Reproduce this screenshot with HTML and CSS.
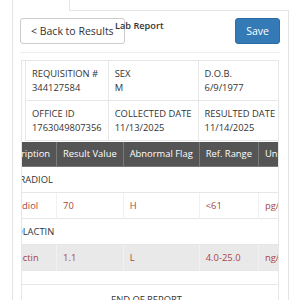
FILE: index.html
```html
<!DOCTYPE html>
<html lang="en">
<head>
    <meta charset="UTF-8">
    <meta name="viewport" content="width=device-width, initial-scale=1.0">
    <title>Lab Report</title>
    <link rel="stylesheet" href="styles.css">
</head>
<body>
    <div class="tabs">
        <div class="tab active"></div>
        <div class="tab-fill"></div>
    </div>
    <div class="panel">
        <div class="report-header">
            <a class="btn btn-default" href="#">&lt; Back to Results</a>
            <h4 class="report-title">Lab Report</h4>
            <button type="button" class="btn btn-primary">Save</button>
        </div>
        <hr>
        <div class="report">
            <table class="info">
                <tr>
                    <td>REQUISITION #<br>344127584</td>
                    <td>SEX<br>M</td>
                    <td>D.O.B.<br>6/9/1977</td>
                </tr>
                <tr>
                    <td>OFFICE ID<br>1763049807356</td>
                    <td>COLLECTED DATE<br>11/13/2025</td>
                    <td>RESULTED DATE<br>11/14/2025</td>
                </tr>
            </table>
            <div class="results-scroll" id="resultsScroll">
                <table class="results">
                    <thead>
                        <tr>
                            <th>Description</th>
                            <th>Result Value</th>
                            <th>Abnormal Flag</th>
                            <th>Ref. Range</th>
                            <th>Units</th>
                        </tr>
                    </thead>
                    <tbody>
                        <tr class="section">
                            <td colspan="5">ESTRADIOL</td>
                        </tr>
                        <tr class="abnormal">
                            <td>Estradiol</td>
                            <td>70</td>
                            <td>H</td>
                            <td>&lt;61</td>
                            <td>pg/mL</td>
                        </tr>
                        <tr class="section">
                            <td colspan="5">PROLACTIN</td>
                        </tr>
                        <tr class="abnormal shaded">
                            <td>Prolactin</td>
                            <td>1.1</td>
                            <td>L</td>
                            <td>4.0-25.0</td>
                            <td>ng/mL</td>
                        </tr>
                        <tr class="spacer">
                            <td colspan="5"></td>
                        </tr>
                        <tr class="end">
                            <td colspan="5">END OF REPORT</td>
                        </tr>
                    </tbody>
                </table>
            </div>
        </div>
    </div>

    <script>
        document.getElementById('resultsScroll').scrollLeft = 29;
    </script>
</body>
</html>
```

FILE: styles.css
```css
body {
    margin: 0;
    font-family: "Open Sans", "Liberation Sans", sans-serif;
    font-size: 9.4px;
    line-height: 14px;
    color: #333;
    background-color: #fff;
}

.tabs {
    display: flex;
    height: 11px;
    margin: 0 11px 0 12px;
}

.tab.active {
    width: 56px;
    border-left: 1px solid #e4e4e4;
    border-right: 1px solid #e4e4e4;
}

.tab-fill {
    flex: 1;
    border-bottom: 1px solid #e4e4e4;
}

.panel {
    margin: 0 11px 0 12px;
    padding: 7px 8px 0 7px;
    border: 1px solid #e4e4e4;
    border-top: none;
}

.report-header {
    position: relative;
    display: flex;
    justify-content: space-between;
    align-items: flex-start;
}

.btn {
    display: inline-block;
    font-family: inherit;
    font-size: 10.5px;
    line-height: 14px;
    padding: 5px 10px;
    border: 1px solid #ccc;
    border-radius: 3px;
    text-decoration: none;
    cursor: pointer;
}

.btn-default {
    color: #333;
    background-color: #fff;
}

.btn-primary {
    color: #fff;
    background-color: #337ab7;
    border-color: #2e6da4;
}

.report-title {
    position: absolute;
    left: 95px;
    top: 1px;
    margin: 0;
    font-size: 9.2px;
    font-weight: 600;
    line-height: 13px;
}

hr {
    margin: 8px 0 7px;
    border: 0;
    border-top: 1px solid #eee;
}

.report {
    margin: 0 1px;
    border: 1px solid #e6e6e6;
    border-bottom: none;
    overflow: hidden;
}

.info {
    margin-left: 3px;
    border-collapse: collapse;
}

.info td {
    padding: 5.5px 6px;
    border: 1px solid #e6e6e6;
    white-space: nowrap;
    vertical-align: top;
}

.info tr:first-child td {
    border-top: none;
}

.results-scroll {
    overflow-x: auto;
}

.results {
    margin-top: 1px;
    border-collapse: collapse;
    white-space: nowrap;
}

.results th {
    padding: 5px 6px;
    background-color: #555;
    color: #fff;
    font-weight: normal;
    text-align: left;
    border: 1px solid #7a7a7a;
    border-top: none;
}

.results td {
    padding: 5.5px 6px;
    border-top: 1px solid #e6e6e6;
    border-left: 1px solid #f1f1f1;
}

.results .section td {
    padding-left: 10px;
}

.results .abnormal td {
    color: #a94442;
}

.results .shaded td {
    background-color: #e9e9e9;
}

.results .spacer td {
    height: 0;
    padding: 6.5px 6px;
}

.results .end td {
    padding-top: 8px;
    text-align: center;
}
```
